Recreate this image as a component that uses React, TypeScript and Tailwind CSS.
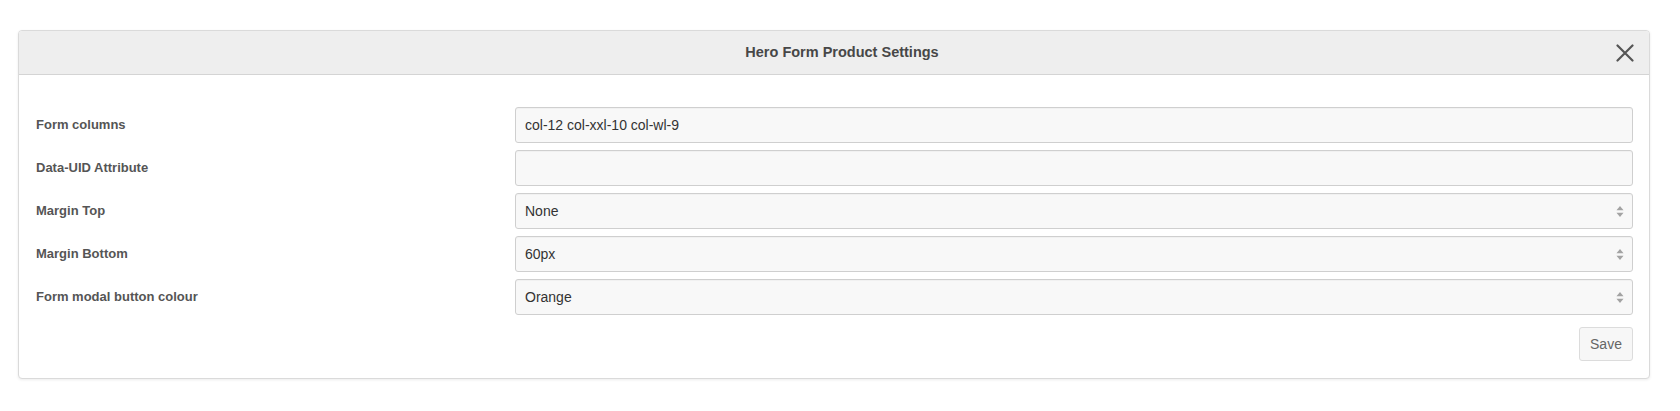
const fields: { label: string; value: string; select?: boolean }[] = [
  { label: "Form columns", value: "col-12 col-xxl-10 col-wl-9" },
  { label: "Data-UID Attribute", value: "" },
  { label: "Margin Top", value: "None", select: true },
  { label: "Margin Bottom", value: "60px", select: true },
  { label: "Form modal button colour", value: "Orange", select: true },
];

const SelectArrows = () => (
  <svg width="8" height="13" viewBox="0 0 8 13" className="shrink-0">
    <path d="M4 1 L7.5 5.2 L0.5 5.2 Z" fill="#a3a3a3" />
    <path d="M0.5 7.8 L7.5 7.8 L4 12 Z" fill="#a3a3a3" />
  </svg>
);

const App = () => {
  return (
    <div
      className="min-h-[411px] bg-white pt-[30px]"
      style={{ fontFamily: '"Liberation Sans", Arial, Helvetica, sans-serif' }}
    >
      <div className="ml-[18px] w-[1632px] overflow-hidden rounded-[4px] border border-[#dadada] bg-white shadow-[0_1px_3px_rgba(0,0,0,0.08)]">
        <div className="relative flex h-[44px] items-center justify-center border-b border-[#d4d4d4] bg-[#eeeeee] pl-[16px]">
          <h1 className="text-[14.5px] font-bold text-[#474747]">Hero Form Product Settings</h1>
          <button
            type="button"
            aria-label="Close"
            className="absolute right-[14px] top-1/2 flex h-[20px] w-[20px] -translate-y-1/2 items-center justify-center"
          >
            <svg width="18" height="18" viewBox="0 0 18 18">
              <path d="M1.5 1.5 L16.5 16.5 M16.5 1.5 L1.5 16.5" stroke="#555" strokeWidth="2.2" strokeLinecap="round" />
            </svg>
          </button>
        </div>

        <div className="pl-[17px] pr-[16px] pt-[32px] pb-[17px]">
          <div className="grid grid-cols-[479px_1fr] gap-y-[7px]">
            {fields.map((field) => (
              <div key={field.label} className="contents">
                <label className="flex items-center text-[13px] font-bold text-[#555]">
                  {field.label}
                </label>
                <div className="flex h-[36px] items-center justify-between rounded-[3px] border border-[#cfcfcf] bg-[#f8f8f8] pl-[9px] pr-[8px] text-[14px] text-[#333] shadow-[inset_0_1px_1px_rgba(0,0,0,0.03)]">
                  <span>{field.value}</span>
                  {field.select && <SelectArrows />}
                </div>
              </div>
            ))}
          </div>

          <div className="mt-[12px] flex justify-end">
            <button
              type="button"
              className="h-[34px] w-[54px] rounded-[3px] border border-[#dcdcdc] bg-[#f7f7f7] text-[14px] text-[#666]"
            >
              Save
            </button>
          </div>
        </div>
      </div>
    </div>
  );
};

export default App;
